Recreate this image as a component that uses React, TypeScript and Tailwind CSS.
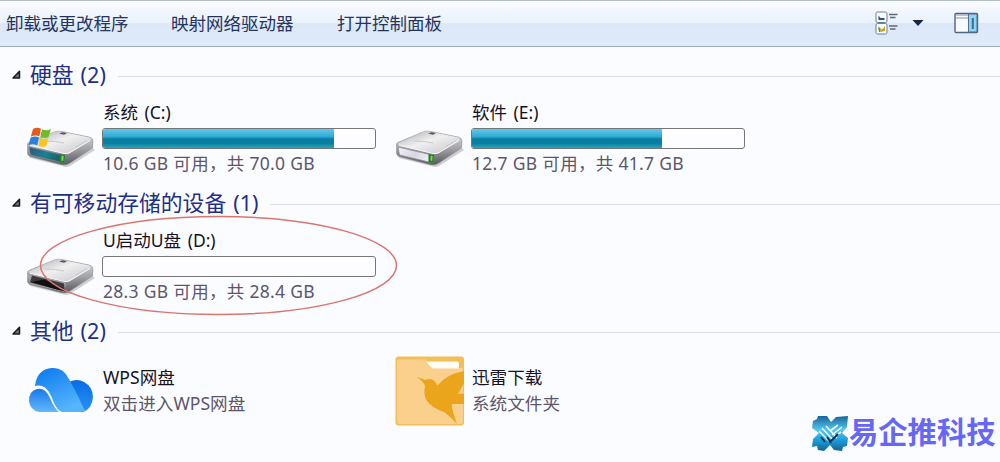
import React from 'react';

interface Drive {
  id: string;
  name: string;
  detail: string;
  used: number;
  kind: 'system' | 'fixed' | 'removable';
}

const hardDrives: Drive[] = [
  { id: 'c', name: '系统 (C:)', detail: '10.6 GB 可用，共 70.0 GB', used: 84.9, kind: 'system' },
  { id: 'e', name: '软件 (E:)', detail: '12.7 GB 可用，共 41.7 GB', used: 70, kind: 'fixed' },
];

const removableDrives: Drive[] = [
  { id: 'd', name: 'U启动U盘 (D:)', detail: '28.3 GB 可用，共 28.4 GB', used: 0, kind: 'removable' },
];

const DriveIcon: React.FC<{ kind: Drive['kind'] }> = ({ kind }) => (
  <svg width="70" height="42" viewBox="0 0 70 42" className="block">
    <defs>
      <linearGradient id={`top-${kind}`} x1="0" y1="0" x2="1" y2="1">
        <stop offset="0" stopColor="#a9a9ad" />
        <stop offset="0.45" stopColor="#f0f0f1" />
        <stop offset="1" stopColor="#c4c4c8" />
      </linearGradient>
      <linearGradient id={`side-${kind}`} x1="0" y1="0" x2="0" y2="1">
        <stop offset="0" stopColor="#e4e4e5" />
        <stop offset="0.5" stopColor="#a5a5a8" />
        <stop offset="1" stopColor="#58585c" />
      </linearGradient>
      <linearGradient id={`front-${kind}`} x1="0" y1="0" x2="1" y2="0.3">
        <stop offset="0" stopColor={kind === 'system' ? '#31547f' : '#f1f1f4'} />
        <stop offset="0.55" stopColor={kind === 'system' ? '#1b8190' : '#d7d7e2'} />
        <stop offset="1" stopColor={kind === 'system' ? '#1d5f66' : '#efeff2'} />
      </linearGradient>
    </defs>
    <path d="M3 27 L39 38 L67 21 L69 23 L44 39 Q40 41 36 39 L4 31Z" fill="#8b8b90" opacity="0.4" />
    <path d="M1.5 18 Q1 16 4 15 L28 5 Q32 3.5 36 4.5 L63 10 Q67 11 67 14 L66.5 21 L44 36 Q40 39 35 37.5 L4 29.5 Q1.5 28.5 1.5 26Z" fill={`url(#side-${kind})`} stroke="#8d8d91" strokeWidth="0.6" />
    <path d="M2.5 16.5 L28 5.5 Q32 4 36 5 L63 10.5 Q66 11.5 64 13.5 L44 26 Q41 27.5 38 26.5 L4 18.5Z" fill={`url(#top-${kind})`} />
    <path d="M4 18.3 L38 26.5 Q41 27 44 25.5 L64 13.5" fill="none" stroke="#f7f7f8" strokeWidth="1" />
    <path d="M19 14 Q30 14 38 16 M50 20 L61 13.5" fill="none" stroke="#c1c1c5" strokeWidth="0.8" />
    <path d="M33 6.5 L36.5 5.2 L41 6 L38 7.7Z" fill="#58585b" />
    {kind === 'removable' ? (
      <>
        <path d="M2.5 18.5 L40 27.5 L38.5 37 L4 29Z" fill="#a2a2a4" />
        <path d="M6 20.5 L38 28.5 L39 36.5 L33 35 L4 27.5Z" fill="#3d3a3e" />
        <path d="M5 27 L18 24.5 L37 33 L38.5 36 L31 34.5Z" fill="#100f11" />
      </>
    ) : (
      <>
        <path d="M3 20 L39 28.5 L38 36 L4.5 28Z" fill={`url(#front-${kind})`} stroke="#85858d" strokeWidth="0.7" />
        <path d="M33.5 27 L39 28 L38.3 36 L33.5 35Z" fill={kind === 'system' ? '#267d35' : '#27762a'} />
        <path d="M35.7 28.5 L37.7 29 L37.2 34 L35.3 33.6Z" fill="#7ddc43" />
      </>
    )}
  </svg>
);

const WindowsFlag = () => (
  <svg width="24" height="21" viewBox="0 0 24 21" className="absolute left-[1.5px] top-0">
    <path d="M5 2 Q9 -0.5 13 1.7 L11.3 9.5 Q7.5 7.5 2.8 9.7Z" fill="#e65a1c" />
    <path d="M14 2.2 Q18.5 4.5 23 2 L20.5 10 Q16.5 12 12.3 9.8Z" fill="#74b92b" />
    <path d="M2.5 10.8 Q7.5 8.5 11 10.6 L9.2 18.4 Q5 16 0.5 18.2Z" fill="#2881dc" />
    <path d="M12 11 Q16.5 13 20.2 11 L18.3 19 Q14.5 21 10.2 18.8Z" fill="#fcc51c" />
  </svg>
);

const SectionHeader: React.FC<{ title: string; count: number }> = ({ title, count }) => (
  <div className="flex h-10 items-center pl-[12px]">
    <svg width="9" height="10" viewBox="0 0 9 10" className="mr-[9px] shrink-0">
      <path d="M7.5 1.2 V8 H1Z" fill="#77777a" stroke="#1b1a1c" strokeWidth="1.5" strokeLinejoin="round" />
    </svg>
    <h2 className="whitespace-nowrap text-[21.8px] leading-10 text-[#1f2f87]">
      {title}<span className="ml-[7px] text-[21.5px]">({count})</span>
    </h2>
    <div className="ml-3 mt-[2px] h-px flex-1 bg-[#dcdde2]" />
  </div>
);

const DriveItem: React.FC<{ drive: Drive }> = ({ drive }) => (
  <div className="flex w-[369px]">
    <div className="relative mt-8 h-[42px] w-[70px] shrink-0">
      <DriveIcon kind={drive.kind} />
      {drive.kind === 'system' && <WindowsFlag />}
    </div>
    <div className="ml-[6px] pt-[5px]">
      <div className="h-7 whitespace-nowrap pl-px text-[17.5px] leading-6 text-[#16121f] [word-spacing:2px]">{drive.name}</div>
      <div className="h-[21px] w-[274px] overflow-hidden rounded-[3px] border border-[#75757a] bg-[#fdfdff]">
        {drive.used > 0 && (
          <div
            className="h-full bg-[linear-gradient(to_bottom,#63c8e9_0%,#32abd4_40%,#087da5_52%,#087f9d_75%,#28a5bd_100%)]"
            style={{ width: `${drive.used}%` }}
          />
        )}
      </div>
      <div className="whitespace-nowrap pl-px pt-[2px] text-[17.5px] leading-6 tracking-[0.3px] text-[#5d566b]">{drive.detail}</div>
    </div>
  </div>
);

const WpsCloud = () => (
  <svg width="66" height="46" viewBox="0 0 66 46" className="mb-[3px]">
    <defs>
      <linearGradient id="cloud-main" x1="0" y1="0" x2="0.5" y2="1">
        <stop offset="0" stopColor="#0878ef" />
        <stop offset="1" stopColor="#55b4fb" />
      </linearGradient>
      <linearGradient id="cloud-left" x1="0" y1="0" x2="0" y2="1">
        <stop offset="0" stopColor="#1778e9" />
        <stop offset="1" stopColor="#62b9fc" />
      </linearGradient>
      <linearGradient id="cloud-right" x1="0" y1="0" x2="0" y2="1">
        <stop offset="0" stopColor="#086be5" />
        <stop offset="1" stopColor="#2994f5" />
      </linearGradient>
    </defs>
    <path d="M41 15 Q49 11 56 15 Q65 20 65 30 Q64 42 55 45 H46Z" fill="url(#cloud-right)" />
    <path d="M7 19 Q9 2 24 1 Q35 0 41 12 L50 29 Q54 38 57 44 Q54 45 50 45 H34 Q29 43 26 36 Q21 21 14 19 Q10 18 7 19Z" fill="url(#cloud-main)" />
    <path d="M1 34 Q1 24 9 22 Q17 20 22 31 Q26 41 31 45 H11 Q2 43 1 34Z" fill="url(#cloud-left)" />
  </svg>
);

const ThunderFolder = () => (
  <svg width="70" height="70" viewBox="0 0 70 70">
    <rect x="0.5" y="0.5" width="68.5" height="69" rx="3" fill="#f5bd55" />
    <path d="M2 3.5 H31 L37 12 H68 V65 Q68 68 65 68 H4 Q2 68 2 65Z" fill="#fad08c" />
    <path d="M31 5.5 H62 Q64 5.5 64 7.5 V12.5 H39 Q37 12.5 36 11Z" fill="#fffdf8" />
    <path d="M22 21 Q27 22.5 30 24 Q37 21 41 27 Q42 30 43 29 Q52 18 69 15 V27 Q66 33 63 38 Q66 37 69 38 V48 Q64 48 57 48 Q56 51 62 68 Q55 60 49 56 Q37 52 32 45 Q28 39 30 30 Q29 26 22 21Z" fill="#eba51d" />
  </svg>
);

const OtherItem: React.FC<{ icon: React.ReactNode; name: string; detail: string }> = ({ icon, name, detail }) => (
  <div className="flex w-[369px]">
    <div className="flex h-[80px] w-[70px] shrink-0 items-center justify-center">{icon}</div>
    <div className="ml-[7px] pt-[13px] text-[17.6px] leading-[26px]">
      <div className="text-[#16121f]">{name}</div>
      <div className="text-[#5d566b]">{detail}</div>
    </div>
  </div>
);

const Toolbar = () => (
  <header className="flex h-[47px] items-center border-b border-t border-b-[#9eabb9] border-t-[#b5bfca] bg-[linear-gradient(to_bottom,#f9fbfe_0%,#eaf2fc_48%,#dce8f7_50%,#dfebf9_100%)] pl-[6px] pr-[21px] text-[17.5px] text-[#25345e]">
    <span className="w-[165px]">卸载或更改程序</span>
    <span className="w-[166px]">映射网络驱动器</span>
    <span>打开控制面板</span>
    <svg width="26" height="24" viewBox="0 0 26 24" className="mb-[2px] ml-auto">
      <rect x="1" y="1" width="11" height="10.5" rx="1.5" fill="#f9fbfe" stroke="#6d7e96" />
      <rect x="1" y="12.5" width="11" height="10.5" rx="1.5" fill="#f9fbfe" stroke="#6d7e96" />
      <path d="M3.5 8.5 V4.5 L5.5 7 H9.5 V9H3.5Z" fill="#24547b" />
      <path d="M3 16 L5.5 17 V21 H4Z" fill="#629321" />
      <path d="M5.5 18 H7.5 L10 15 V20 L5.5 21Z" fill="#d5a313" />
      <path d="M14 3.5 H22.5 M15 6.5 H20.5 M14 15 H22.5 M15 18 H20.5" stroke="#5d6a7d" strokeWidth="1.3" />
    </svg>
    <svg width="12" height="8" viewBox="0 0 12 8" className="mb-px ml-[11px]">
      <path d="M0.5 1 H11.5 L6 7Z" fill="#172544" />
    </svg>
    <svg width="25" height="22" viewBox="0 0 25 22" className="mb-px ml-[30px]">
      <rect x="1" y="1.5" width="22.5" height="19" rx="1" fill="#f7faff" stroke="#506581" strokeWidth="1.4" />
      <path d="M2 3 H14 M2 6 H14" stroke="#8794aa" />
      <rect x="14.5" y="2" width="8.5" height="18" fill="#94d3ef" stroke="#4d718d" />
      <path d="M18.8 6 V17" stroke="#316e9d" strokeWidth="2" />
    </svg>
  </header>
);

const Watermark = () => (
  <div className="absolute left-[811px] top-[415px] flex h-9 items-center">
    <svg width="38" height="37" viewBox="0 0 38 37">
      <defs>
        <linearGradient id="mark" x1="0" y1="0" x2="0" y2="1">
          <stop offset="0" stopColor="#15649b" />
          <stop offset="0.4" stopColor="#55c8ee" />
          <stop offset="0.7" stopColor="#1b9bd8" />
          <stop offset="1" stopColor="#126394" />
        </linearGradient>
      </defs>
      <path d="M2 6 L6 4 L7 1 H16 L20 7 L25 2 L37 1 L36 12 L31 18 L37 23 L36 31 L32 32 L31 36 L23 35 L19 30 L13 36 L7 35 L6 31 L1 32 L2 24 L8 18 L1 13Z" fill="url(#mark)" />
      <path d="M8 16 L18 26 M11 13 L22 25 M15 11 L26 23 M31 12 L21 20 M27 10 L19 16 M30 17 L23 22" stroke="#eefbff" strokeWidth="1.6" />
      <path d="M10 22 L14 27 M16 22 L20 28 M20 26 L27 19" stroke="#082e4b" strokeWidth="1.8" />
    </svg>
    <span className="-mt-[3px] whitespace-nowrap text-[29.3px] font-bold leading-9 text-[#6667f6]">易企推科技</span>
  </div>
);

export default function App() {
  return (
    <div className="relative h-[462px] w-[1000px] overflow-hidden bg-[#fbfcff] font-['Noto_Sans','Noto_Sans_CJK_SC',sans-serif]">
      <Toolbar />
      <main className="pt-2">
        <section className="h-32">
          <SectionHeader title="硬盘" count={2} />
          <div className="flex pl-[26px]">
            {hardDrives.map(drive => <DriveItem key={drive.id} drive={drive} />)}
          </div>
        </section>
        <section className="h-32">
          <SectionHeader title="有可移动存储的设备" count={1} />
          <div className="flex pl-[26px]">
            {removableDrives.map(drive => <DriveItem key={drive.id} drive={drive} />)}
          </div>
        </section>
        <section>
          <SectionHeader title="其他" count={2} />
          <div className="flex pl-[26px]">
            <OtherItem icon={<WpsCloud />} name="WPS网盘" detail="双击进入WPS网盘" />
            <OtherItem icon={<ThunderFolder />} name="迅雷下载" detail="系统文件夹" />
          </div>
        </section>
      </main>
      {/* Marca em volta do pendrive */}
      <svg width="360" height="102" viewBox="0 0 360 102" className="absolute left-[39px] top-[215px]">
        <ellipse cx="179.5" cy="50.5" rx="178" ry="49" fill="none" stroke="#d9756f" strokeWidth="1.5" />
      </svg>
      <Watermark />
    </div>
  );
}
